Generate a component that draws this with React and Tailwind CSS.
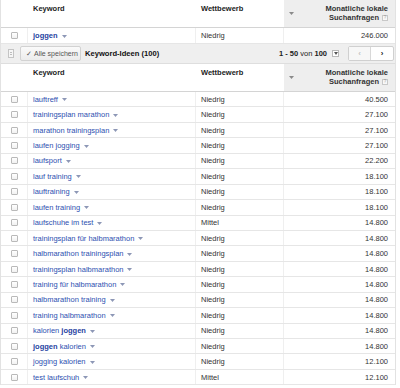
import React from "react";

const rows = [
  [["lauftreff"]], "Niedrig", "40.500",
];

const data = [
  [[["lauftreff", false]], "Niedrig", "40.500"],
  [[["trainingsplan marathon", false]], "Niedrig", "27.100"],
  [[["marathon trainingsplan", false]], "Niedrig", "27.100"],
  [[["laufen jogging", false]], "Niedrig", "27.100"],
  [[["laufsport", false]], "Niedrig", "22.200"],
  [[["lauf training", false]], "Niedrig", "18.100"],
  [[["lauftraining", false]], "Niedrig", "18.100"],
  [[["laufen training", false]], "Niedrig", "18.100"],
  [[["laufschuhe im test", false]], "Mittel", "14.800"],
  [[["trainingsplan für halbmarathon", false]], "Niedrig", "14.800"],
  [[["halbmarathon trainingsplan", false]], "Niedrig", "14.800"],
  [[["trainingsplan halbmarathon", false]], "Niedrig", "14.800"],
  [[["training für halbmarathon", false]], "Niedrig", "14.800"],
  [[["halbmarathon training", false]], "Niedrig", "14.800"],
  [[["training halbmarathon", false]], "Niedrig", "14.800"],
  [[["kalorien ", false], ["joggen", true]], "Niedrig", "14.800"],
  [[["joggen", true], [" kalorien", false]], "Niedrig", "14.800"],
  [[["jogging kalorien", false]], "Niedrig", "12.100"],
  [[["test laufschuh", false]], "Mittel", "12.100"],
];

function Checkbox() {
  return (
    <span className="block w-[7px] h-[7px] border border-[#b9b9b9] rounded-[1px] bg-gradient-to-b from-white to-[#f1f1f1]" />
  );
}

function Caret() {
  return (
    <svg width="5" height="3" viewBox="0 0 5 3" className="ml-[4px] mt-[1px]">
      <path d="M0 0H5L2.5 3Z" fill="#8d97b6" />
    </svg>
  );
}

function Keyword({ parts }) {
  return (
    <span className="flex items-center">
      <span className="text-[#2d4fb0] whitespace-pre">
        {parts.map(([t, b], i) => (
          <span key={i} className={b ? "font-bold text-[#1f3f9f]" : ""}>
            {t}
          </span>
        ))}
      </span>
      <Caret />
    </span>
  );
}

function Header() {
  return (
    <div className="flex h-[28px] border-b border-[#d4d4d4] bg-white">
      <div className="w-[27px]" />
      <div className="w-[168px] pl-[5px] pt-[4px] font-bold text-[#222] leading-[9px]">Keyword</div>
      <div className="w-[88px] pl-[5px] pt-[4px] font-bold text-[#222] leading-[9px]">Wettbewerb</div>
      <div className="flex-1 bg-[#eeeeee] flex justify-between pl-[5px] pr-[7px] pt-[4px]">
        <svg width="5" height="3" viewBox="0 0 5 3" className="mt-[8px]">
          <path d="M0 0H5L2.5 3Z" fill="#8a8a8a" />
        </svg>
        <div className="text-right font-bold text-[#333] leading-[9px]">
          <div>Monatliche lokale</div>
          <div className="flex items-center justify-end">
            Suchanfragen
            <span className="ml-[3px] w-[6px] h-[6px] border border-[#c8c8c8] bg-[#f8f8f8] text-[4.5px] leading-[5px] text-[#999] font-normal flex items-center justify-center">
              ?
            </span>
          </div>
        </div>
      </div>
    </div>
  );
}

function Row({ parts, comp, num, h }) {
  return (
    <div className={`flex border-b border-[#e6e6e6] ${h}`}>
      <div className="w-[27px] flex items-center justify-center pl-[1px] border-r border-[#efefef]">
        <Checkbox />
      </div>
      <div className="w-[168px] pl-[5px] flex items-center border-r border-[#efefef]">
        <Keyword parts={parts} />
      </div>
      <div className="w-[88px] pl-[5px] flex items-center text-[#333] border-r border-[#efefef]">{comp}</div>
      <div className="flex-1 pr-[7px] flex items-center justify-end text-[#333]">{num}</div>
    </div>
  );
}

export default function App() {
  return (
    <div
      className="w-[400px] h-[388px] bg-white overflow-hidden text-[7.5px] leading-[9px]"
      style={{ fontFamily: '"Liberation Sans", Arial, sans-serif' }}
    >
      <div className="w-[396px] border-l border-r border-[#e2e2e2]">
        <Header />
        <Row parts={[["joggen", true]]} comp="Niedrig" num="246.000" h="h-[16px]" />
        <div className="flex items-center h-[20px] bg-[#efefef] border-b border-[#dedede]">
          <div className="w-[19px] flex justify-center">
            <span className="flex flex-col justify-center gap-[1px] w-[6px] h-[9px] border border-[#c4c4c4] bg-[#f6f6f6] px-[1px]">
              <span className="block h-px bg-[#bdbdbd]" />
              <span className="block h-px bg-[#bdbdbd]" />
            </span>
          </div>
          <div className="h-[15px] w-[61px] border border-[#d2d2d2] rounded-[2px] bg-gradient-to-b from-[#fafafa] to-[#ececec] flex items-center pl-[5px] text-[#555] text-[7px]">
            <span className="mr-[2px] text-[7px]">✓</span>Alle speichern
          </div>
          <div className="ml-[4px] font-bold text-[#111] text-[7.6px]">Keyword-Ideen (100)</div>
          <div className="flex-1" />
          <div className="text-[#222]">
            <span className="font-bold">1 - 50</span> von <span className="font-bold">100</span>
          </div>
          <span className="ml-[5px] w-[7px] h-[7px] border border-[#b8b8b8] bg-white flex items-center justify-center">
            <svg width="4" height="3" viewBox="0 0 4 3">
              <path d="M0 0H4L2 3Z" fill="#555" />
            </svg>
          </span>
          <div className="ml-[9px] mr-[1px] flex h-[15px] border border-[#d0d0d0] rounded-[2px] bg-white">
            <div className="w-[22px] flex items-center justify-center border-r border-[#d8d8d8] bg-[#f7f7f7] text-[#c4c4c4] font-bold text-[8px]">
              ‹
            </div>
            <div className="w-[22px] flex items-center justify-center text-[#222] font-bold text-[8px]">›</div>
          </div>
        </div>
        <Header />
        {data.map(([parts, comp, num], i) => (
          <Row key={i} parts={parts} comp={comp} num={num} h="h-[15.45px]" />
        ))}
      </div>
    </div>
  );
}
